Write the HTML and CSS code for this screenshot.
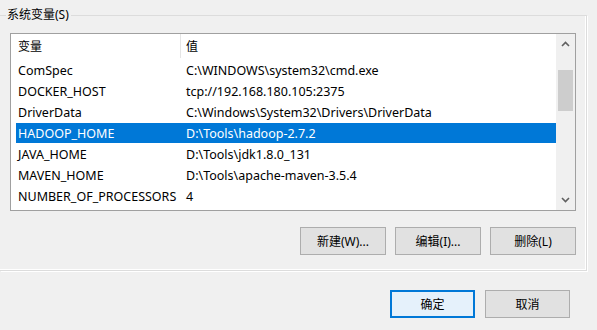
FILE: index.html
```html
<!DOCTYPE html>
<html lang="zh-CN">
<head>
<meta charset="utf-8">
<link rel="stylesheet" href="styles.css">
</head>
<body>
<div class="group">
  <div class="group-label">系统变量(S)</div>
  <div class="list">
    <div class="list-main">
      <div class="header">
        <div class="col-name">变量</div>
        <div class="col-sep"></div>
        <div class="col-val">值</div>
      </div>
      <div class="rows">
        <div class="row"><div class="col-name">ComSpec</div><div class="col-val">C:\WINDOWS\system32\cmd.exe</div></div>
        <div class="row"><div class="col-name">DOCKER_HOST</div><div class="col-val">tcp://192.168.180.105:2375</div></div>
        <div class="row"><div class="col-name">DriverData</div><div class="col-val">C:\Windows\System32\Drivers\DriverData</div></div>
        <div class="row selected"><div class="col-name">HADOOP_HOME</div><div class="col-val">D:\Tools\hadoop-2.7.2</div></div>
        <div class="row"><div class="col-name">JAVA_HOME</div><div class="col-val">D:\Tools\jdk1.8.0_131</div></div>
        <div class="row"><div class="col-name">MAVEN_HOME</div><div class="col-val">D:\Tools\apache-maven-3.5.4</div></div>
        <div class="row"><div class="col-name">NUMBER_OF_PROCESSORS</div><div class="col-val">4</div></div>
      </div>
    </div>
    <div class="scrollbar">
      <div class="arrow">
        <svg width="9" height="6" viewBox="0 0 9 6"><path d="M1 5 L4.5 1.5 L8 5" fill="none" stroke="#606060" stroke-width="1.6"/></svg>
      </div>
      <div class="track"><div class="thumb"></div></div>
      <div class="arrow">
        <svg width="9" height="6" viewBox="0 0 9 6"><path d="M1 1 L4.5 4.5 L8 1" fill="none" stroke="#606060" stroke-width="1.6"/></svg>
      </div>
    </div>
  </div>
  <div class="group-buttons">
    <button class="btn">新建(W)...</button>
    <button class="btn">编辑(I)...</button>
    <button class="btn">删除(L)</button>
  </div>
</div>
<div class="dialog-buttons">
  <button class="btn default">确定</button>
  <button class="btn">取消</button>
</div>
</body>
</html>
```

FILE: styles.css
```css
* { box-sizing: border-box; }
html, body {
  margin: 0;
  padding: 0;
  background: #f0f0f0;
  width: 597px;
  height: 330px;
  overflow: hidden;
  font-family: "Noto Sans", "Noto Sans CJK SC", sans-serif;
  font-size: 12px;
  color: #000;
}
.group {
  position: relative;
  margin: 15px 10px 0 0;
  height: 256px;
  border: 1px solid #dcdcdc;
  border-left: none;
  box-shadow: inset -1px -1px 0 #fff, 1px 1px 0 #fff;
  padding: 17px 10px 0 10px;
}
.group-label {
  position: absolute;
  left: 6px;
  top: -9px;
  padding: 0 2px 0 1px;
  background: #f0f0f0;
  line-height: 16px;
}
.list {
  display: flex;
  height: 178px;
  border: 1px solid #a0a0a0;
  background: #fff;
}
.list-main {
  flex: 1;
  display: flex;
  flex-direction: column;
  font-size: 12.5px;
}
.header {
  display: flex;
  height: 24px;
  align-items: center;
  padding-left: 5px;
  font-size: 12px;
}
.header .col-name { width: 164px; padding-left: 2px; }
.col-sep {
  width: 1px;
  height: 24px;
  background: #e5e5e5;
}
.header .col-val { padding-left: 5px; }
.rows {
  padding-top: 2px;
  display: flex;
  flex-direction: column;
  gap: 1px;
}
.row {
  display: flex;
  height: 20px;
  align-items: center;
  margin-left: 5px;
  white-space: nowrap;
}
.row .col-name { width: 170px; padding-left: 2px; }
.row .col-val { padding-left: 0; }
.row.selected { background: #0078d7; color: #fff; }
.scrollbar {
  width: 19px;
  display: flex;
  flex-direction: column;
  background: #f0f0f0;
}
.arrow {
  height: 17px;
  display: flex;
  align-items: center;
  justify-content: center;
  padding-top: 3px;
}
.arrow:last-child { padding-top: 0; padding-bottom: 3px; }
.track {
  flex: 1;
  padding: 19px 2px 0 2px;
}
.thumb {
  height: 41px;
  background: #cdcdcd;
}
.group-buttons {
  display: flex;
  justify-content: flex-end;
  gap: 9px;
  margin-top: 16px;
  padding-right: 0;
}
.btn {
  width: 86px;
  height: 28px;
  background: #e1e1e1;
  border: 1px solid #adadad;
  font-family: "Noto Sans", "Noto Sans CJK SC", sans-serif;
  font-size: 12px;
  color: #000;
  padding: 0;
  margin: 0;
}
.btn.default {
  border: 2px solid #0078d7;
  background: #e5f1fb;
  width: 85px;
}
.dialog-buttons {
  display: flex;
  justify-content: flex-end;
  gap: 10px;
  margin-top: 19px;
  padding-right: 27px;
}
.dialog-buttons .btn { width: 85px; }
```
